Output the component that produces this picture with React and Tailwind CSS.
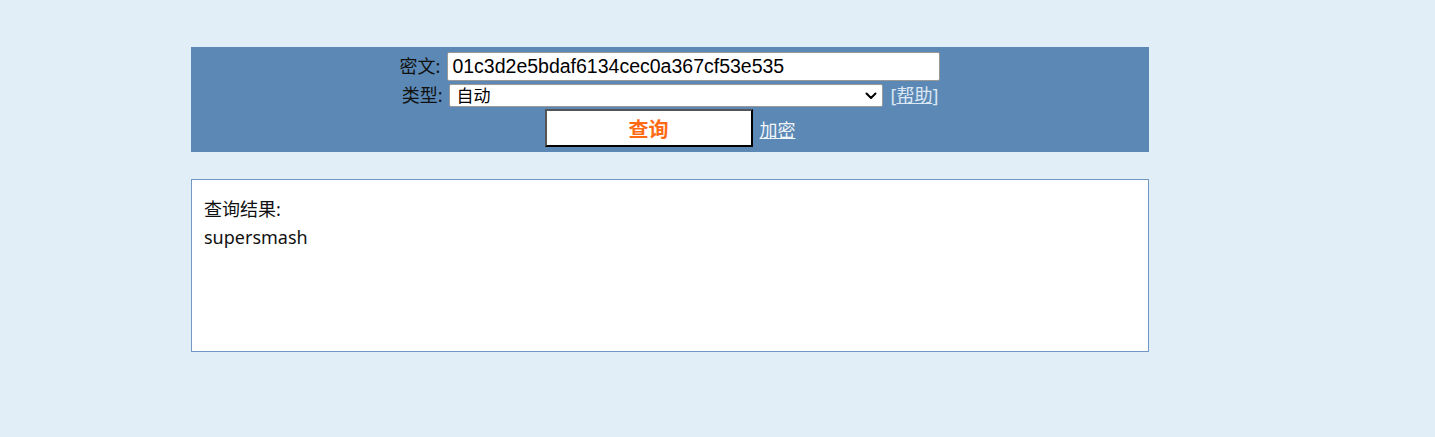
export default function App() {
  const font = { fontFamily: '"Noto Sans", "Noto Sans CJK SC", sans-serif' };
  const arial = { fontFamily: '"Liberation Sans", "Noto Sans CJK SC", sans-serif' };
  return (
    <div className="min-h-[437px] w-full bg-[#e1eef7] pt-[47px]" style={font}>
      <div className="ml-[191px] flex w-[958px] flex-col items-center gap-[2px] bg-[#5b88b4] py-[5px] text-[18px] text-[#111]">
        <div className="flex h-[29px] items-center">
          <span className="mr-[7px]">密文:</span>
          <input
            readOnly
            value="01c3d2e5bdaf6134cec0a367cf53e535"
            style={arial}
            className="h-[29px] w-[493px] rounded-[2px] border border-[#999] bg-white px-[4px] text-[19.5px] text-black outline-none"
          />
        </div>
        <div className="mt-[1px] flex h-[23px] items-center">
          <span className="mr-[7px]">类型:</span>
          <div className="relative h-[23px] w-[434px]">
            <select className="block h-[23px] w-full appearance-none rounded-[2px] border border-[#999] bg-white py-0 pl-[6px] text-[17px] leading-[21px] text-black outline-none">
              <option>自动</option>
            </select>
            <svg
              className="pointer-events-none absolute right-[6px] top-[8px]"
              width="12"
              height="8"
              viewBox="0 0 12 8"
              fill="none"
            >
              <path d="M1.5 1.5 L6 6 L10.5 1.5" stroke="#000" strokeWidth="2" strokeLinecap="round" strokeLinejoin="round" />
            </svg>
          </div>
          <span className="ml-[7px] text-[#dbe8f4]">
            [<span className="underline">帮助</span>]
          </span>
        </div>
        <div className="flex h-[38px] items-center">
          <button className="h-[38px] w-[208px] border-2 border-t-[#555] border-l-[#555] border-b-black border-r-black bg-white pt-[3px] text-[20px] font-bold text-[#ff6a13]">
            查询
          </button>
          <span className="ml-[7px] pt-[5px] text-[18px] text-[#f0f5fa] underline">加密</span>
        </div>
      </div>
      <div className="ml-[191px] mt-[27px] h-[173px] w-[958px] border border-[#6f99c2] bg-white px-[12px] pt-[15px] text-[18px] leading-[28px] text-[#111]">
        <div>查询结果:</div>
        <div>supersmash</div>
      </div>
    </div>
  );
}
